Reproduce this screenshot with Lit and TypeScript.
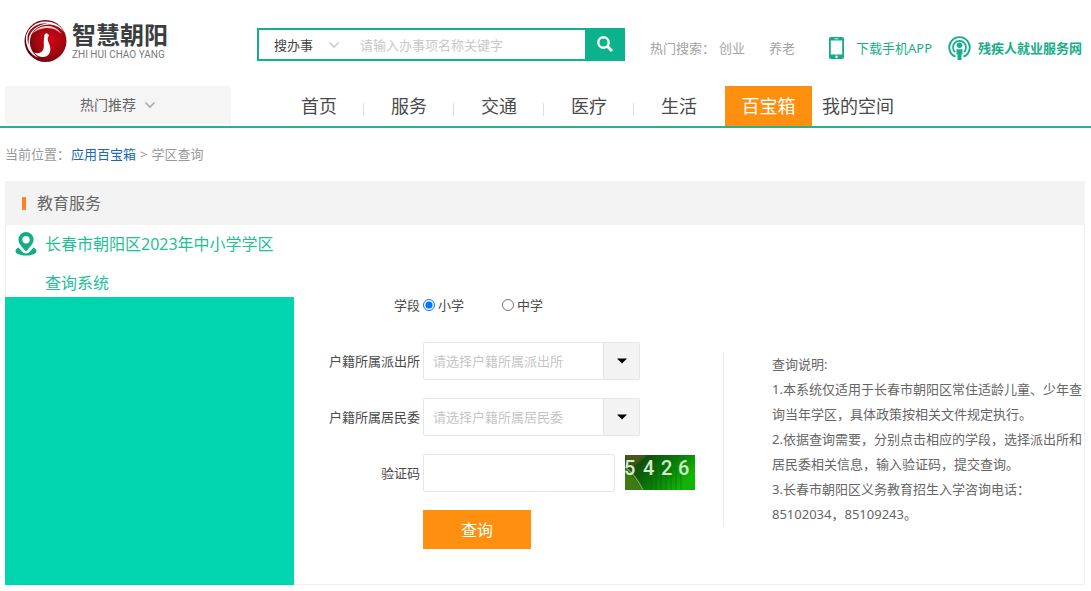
import { LitElement, html, css, svg } from "lit";
import { customElement, state } from "lit/decorators.js";

const chevron = (cls: string) => html`<svg class=${cls} viewBox="0 0 12 8" width="12" height="8" aria-hidden="true">
  <path d="M1.5 1.5 6 6 10.5 1.5" fill="none" stroke="currentColor" stroke-width="1.6" />
</svg>`;

@customElement("site-logo")
class SiteLogo extends LitElement {
  static styles = css`
    :host { display: block; }
    .logo { display: flex; align-items: center; gap: 5px; color: #3a3e40; text-decoration: none; }
    .names { display: flex; flex-direction: column; }
    .zh { font-size: 24px; line-height: 28px; font-weight: 600; white-space: nowrap; }
    .en { font: 10px/12px Roboto, "Liberation Sans", sans-serif; color: #77797b; white-space: nowrap; }
  `;
  render() {
    return html`<a class="logo" href="#">
      <svg width="43" height="44" viewBox="0 0 43 44" aria-hidden="true">
        <defs>
          <radialGradient id="ball" cx="62%" cy="48%" r="60%">
            <stop offset="0" stop-color="#cf0712" />
            <stop offset="0.55" stop-color="#a50710" />
            <stop offset="1" stop-color="#650509" />
          </radialGradient>
        </defs>
        <circle cx="21.5" cy="22" r="21" fill="url(#ball)" />
        <path d="M2 17C5 8 12 3 21 2.6 30 2.4 37 7 40 13 34 6 27 4.6 20 6 12 7.8 7 13 6 21c-.8 8 3 14 9 18C6 36 1 27 2 17Z" fill="#fff" />
        <path d="M4 15C8 7 15 4 23 4.4 16 5.4 9 8.600 5.600 16.500 4.500 20 4.500 23 4.800 26 3.200 22 3 19 4 15Z" fill="#9a0b12" />
        <path d="M8 15c4-6 10-8.500 17-8 6 .6 10 4 12.500 8C33 10.500 28 8.500 22 9 16 9.500 11 12 8 15Z" fill="#f0cfd0" />
        <path d="M20.500 15.500 22.500 14 24 15.200c1.500.4 1 1.800.2 2.600-1 1.600-.4 4 1 7.200 2 5 1.400 9.500-2.200 12-3.600 2-9 1.600-13-3.500 4 1.500 7.500.5 9-2.500 1.800-4 .2-7 1-11.500.2-1.500.5-2.700.5-4Z" fill="#fff" />
      </svg>
      <span class="names"><span class="zh">智慧朝阳</span><span class="en">ZHI HUI CHAO YANG</span></span>
    </a>`;
  }
}

@customElement("site-header")
class SiteHeader extends LitElement {
  static styles = css`
    :host { display: block; }
    .bar { display: flex; align-items: center; height: 81px; padding: 0 8px 0 24px; }
    .logo { width: 233px; flex: none; }
    .search { display: flex; flex: none; width: 368px; height: 33px; box-sizing: border-box; border: 2px solid #14b18a; margin-top: 8px; }
    .kind { position: relative; display: flex; align-items: center; width: 92px; flex: none; }
    select, input { font: inherit; border: 0; background: none; outline: 0; color: #444; }
    select { appearance: none; width: 100%; height: 100%; padding: 0 15px; }
    .arrow { position: absolute; right: 11px; color: #ccc; pointer-events: none; }
    input { flex: 1; min-width: 0; padding: 0 9px; }
    input::placeholder { color: #c8c8c8; opacity: 1; }
    .go { width: 40px; flex: none; margin: -2px; border: 0; padding: 0 0 1px; background: #0bb28b; display: grid; place-items: center; }
    .hot { display: flex; margin: 14px 0 0 25px; color: #a3a3a3; white-space: nowrap; }
    .hot a { color: inherit; text-decoration: none; margin-right: 24px; }
    .hot span { width: 69px; }
    .link { display: flex; align-items: center; color: #17ae88; text-decoration: none; white-space: nowrap; margin-top: 14px; }
    .app { margin-left: 10px; margin-right: 16px; gap: 12px; }
    .job { gap: 7px; font-weight: 700; }
  `;
  render() {
    return html`<header class="bar">
      <site-logo class="logo"></site-logo>
      <form class="search" role="search" @submit=${(e: Event) => e.preventDefault()}>
        <span class="kind">
          <select aria-label="搜索类型"><option>搜办事</option></select>
          ${chevron("arrow")}
        </span>
        <input type="text" aria-label="关键字" placeholder="请输入办事项名称关键字" />
        <button class="go" aria-label="搜索">
          <svg width="18" height="18" viewBox="0 0 18 18" fill="none" stroke="#fff" aria-hidden="true">
            <circle cx="7.500" cy="7.500" r="5.200" stroke-width="2.400" />
            <path d="m11.300 11.300 4.700 4.700" stroke-width="3" />
          </svg>
        </button>
      </form>
      <div class="hot"><span>热门搜索：</span><a href="#">创业</a><a href="#">养老</a></div>
      <a class="link app" href="#">
        <svg width="15" height="22" viewBox="0 0 15 22" aria-hidden="true">
          <rect width="15" height="22" rx="2" fill="#10ae88" />
          <path d="M1.800 3.500h11.400v14H1.800z" fill="#fff" />
          <path d="M5.500 1.800h4" stroke="#fff" stroke-width=".8" />
          <circle cx="7.500" cy="19.700" r="1.200" fill="#fff" />
        </svg>下载手机APP</a>
      <a class="link job" href="#">
        <svg width="23" height="24" viewBox="0 0 23 24" fill="none" stroke="#14ae88" aria-hidden="true">
          <path d="M7.500 20.700a10.200 10.200 0 1 1 8 0" stroke-width="1.900" />
          <path d="M7.200 16.200a6.500 6.500 0 1 1 8.600 0" stroke-width="1.700" />
          <circle cx="11.500" cy="9.300" r="2.700" fill="#14ae88" stroke="none" />
          <path d="M8.500 13.300h6v5h-1V24h-4v-5.700h-1z" fill="#14ae88" stroke="none" />
        </svg>残疾人就业服务网</a>
    </header>`;
  }
}

@customElement("site-nav")
class SiteNav extends LitElement {
  static styles = css`
    :host { display: block; }
    .nav { display: flex; padding: 0 5px; margin-top: 5px; border-bottom: 2px solid #2bb08c; height: 40px; }
    .rec { width: 226px; flex: none; height: 38px; border: 0; background: #f5f5f5; color: #666; font: inherit; font-size: 14px; display: flex; align-items: center; justify-content: center; gap: 8px; padding: 0; margin-right: 43px; }
    .mark { color: #aaa; }
    .item { display: grid; place-items: center; width: 90px; flex: none; font-size: 18px; line-height: 40px; color: #4a4a4a; text-decoration: none; white-space: nowrap; position: relative; }
    .sep::after { content: ""; position: absolute; right: 0; top: 17px; height: 13px; width: 1px; background: #ddd; }
    .on { width: 87px; margin-left: 1px; background: #ff8f0e; color: #fff; }
    .mine { width: 92px; }
  `;
  render() {
    const names = ["首页", "服务", "交通", "医疗", "生活"];
    return html`<nav class="nav">
      <button class="rec">热门推荐 ${chevron("mark")}</button>
      ${names.map((n, i) => html`<a class="item ${i < 4 ? "sep" : ""}" href="#">${n}</a>`)}
      <a class="item on" href="#" aria-current="page">百宝箱</a>
      <a class="item mine" href="#">我的空间</a>
    </nav>`;
  }
}

@customElement("district-form")
class DistrictForm extends LitElement {
  @state() private stage = "小学";
  static styles = css`
    :host { display: block; }
    .form { display: grid; grid-template-columns: 126px minmax(0, 1fr); column-gap: 3px; row-gap: 18px; align-items: center; padding-top: 61px; color: #4a4a4a; }
    .label { text-align: right; white-space: nowrap; }
    .stages { display: flex; gap: 38px; height: 38px; align-items: center; }
    .stage { display: flex; align-items: center; gap: 3px; }
    .radio { margin: 0; width: 12px; height: 12px; }
    .pick { position: relative; width: 217px; height: 38px; display: flex; }
    .select, .code { box-sizing: border-box; font: inherit; border: 1px solid #e6e6e6; border-radius: 2px; background: #fff; height: 38px; outline: 0; }
    .select { appearance: none; width: 100%; padding: 0 46px 0 9px; color: #c6c6c6; }
    .toggle { position: absolute; right: 1px; top: 1px; bottom: 1px; width: 35px; background: #f3f3f3; border-left: 1px solid #e6e6e6; display: grid; place-items: center; pointer-events: none; }
    .verify { display: flex; align-items: center; gap: 10px; }
    .code { width: 192px; padding: 0 10px; color: #444; }
    .captcha { display: block; flex: none; margin-bottom: 2px; }
    .digit { font: 500 20px Roboto, sans-serif; fill: #d3ecc9; }
    .send { grid-column: 2; justify-self: start; width: 108px; height: 39px; border: 0; padding: 0; background: #ff8f0e; color: #fff; font: inherit; font-size: 16px; }
  `;
  private picker(id: string, name: string) {
    return html`<label class="label" for=${id}>${name}</label>
      <span class="pick">
        <select class="select" id=${id}><option>请选择${name}</option></select>
        <span class="toggle"><svg width="10" height="6" viewBox="0 0 10 6" aria-hidden="true"><path d="M0 .5h10L5 5.500z" /></svg></span>
      </span>`;
  }
  render() {
    return html`<form class="form" @submit=${(e: Event) => e.preventDefault()}>
      <span class="label" id="stage">学段</span>
      <div class="stages" role="radiogroup" aria-labelledby="stage">
        ${["小学", "中学"].map((s) => html`<label class="stage">
          <input class="radio" type="radio" name="stage" .checked=${this.stage === s} @change=${() => (this.stage = s)} />${s}</label>`)}
      </div>
      ${this.picker("station", "户籍所属派出所")}
      ${this.picker("committee", "户籍所属居民委")}
      <label class="label" for="code">验证码</label>
      <span class="verify">
        <input class="code" id="code" type="text" />
        <svg class="captcha" width="70" height="35" viewBox="0 0 70 35" role="img" aria-label="验证码图片">
          <defs>
            <linearGradient id="leaf" x1="0" y1="0" x2="1" y2="0.500">
              <stop offset="0" stop-color="#37551a" />
              <stop offset="0.300" stop-color="#12510a" />
              <stop offset="0.600" stop-color="#087509" />
              <stop offset="1" stop-color="#12b507" />
            </linearGradient>
          </defs>
          <path d="M0 0h70v35H0z" fill="url(#leaf)" />
          <path d="M0 14C7 20 13 27 17 35H0z" fill="#3c7a16" />
          <path d="M0 12C8 18 14 27 18 35" fill="none" stroke="#86a840" stroke-width="1.200" />
          <path d="M0 0h22L8 12z" fill="#5b5c24" opacity=".6" />
          ${[26, 31, 36, 41, 46, 51, 56].map((x) => svg`<path d="M${x} 12v23" stroke="#0a4d08" stroke-width="1" opacity=".35" />`)}
          ${["5", "4", "2", "6"].map((d, i) => svg`<text class="digit" x=${[-1, 18, 36, 53][i]} y="20">${d}</text>`)}
        </svg>
      </span>
      <button class="send">查询</button>
    </form>`;
  }
}

@customElement("app-root")
class AppRoot extends LitElement {
  static styles = css`
    :host { display: block; min-height: 100vh; background: #fff; color: #666; font: 13px/20px "Noto Sans", "Noto Sans CJK SC", sans-serif; }
    .crumbs { display: flex; gap: 4px; padding: 16px 5px 17px; color: #999; line-height: 20px; }
    .here { width: 62px; white-space: nowrap; }
    .crumbs a { color: #1c68b3; text-decoration: none; }
    .panel { margin: 0 6px 6px 5px; border: 1px solid #f0f0f0; border-top: 0; }
    .title { display: flex; align-items: center; gap: 11px; margin: 0 -1px; padding-left: 17px; height: 44px; background: #f3f3f3; font-size: 16px; font-weight: 400; color: #666; }
    .title::before { content: ""; width: 4px; height: 13px; border-radius: 1px; background: #ff7f27; }
    .body { display: grid; grid-template-columns: 288px minmax(0, 1fr) 361px; align-items: start; }
    .name { display: flex; gap: 8px; margin: 0 0 -6px; padding: 0 12px 0 9px; font-size: 16px; line-height: 39px; font-weight: 400; color: #1fc096; }
    .pin { flex: none; margin-top: 7px; }
    .side { height: 288px; margin-left: -1px; margin-bottom: -1px; background: #00d5b0; }
    .notes { margin-top: 127px; padding-left: 48px; border-left: 1px solid #ebebeb; line-height: 25px; }
    .notes p { margin: 0; }
  `;
  render() {
    return html`<site-header></site-header>
      <site-nav></site-nav>
      <nav class="crumbs" aria-label="当前位置"><span class="here">当前位置：</span><a href="#">应用百宝箱</a><span>&gt;</span><span>学区查询</span></nav>
      <main class="panel">
        <h1 class="title">教育服务</h1>
        <div class="body">
          <section>
            <h2 class="name">
              <svg class="pin" width="22" height="24" viewBox="0 0 22 24" aria-hidden="true">
                <path d="M3.500 15.500C1.500 16.500.5 17.700.5 19c0 2.800 4.500 4.500 10.500 4.500S21.500 21.800 21.500 19c0-1.300-1-2.500-3-3.500l-3.500 4c-1.200 1.300-2.500 2-4 2s-2.800-.7-4-2z" fill="#12ad86" />
                <path fill-rule="evenodd" d="M11 0a7.600 7.600 0 0 0-7.600 7.600C3.400 12 7.500 15.500 11 19.500c3.500-4 7.600-7.500 7.600-11.900A7.600 7.600 0 0 0 11 0Zm0 4a3.700 3.700 0 1 1 0 7.400A3.700 3.700 0 0 1 11 4Z" fill="#12ad86" />
              </svg>
              <span>长春市朝阳区2023年中小学学区查询系统</span>
            </h2>
            <div class="side"></div>
          </section>
          <district-form></district-form>
          <section class="notes">
            <p>查询说明:</p>
            <p>1.本系统仅适用于长春市朝阳区常住适龄儿童、少年查询当年学区，具体政策按相关文件规定执行。</p>
            <p>2.依据查询需要，分别点击相应的学段，选择派出所和居民委相关信息，输入验证码，提交查询。</p>
            <p>3.长春市朝阳区义务教育招生入学咨询电话：<br />85102034，85109243。</p>
          </section>
        </div>
      </main>`;
  }
}
